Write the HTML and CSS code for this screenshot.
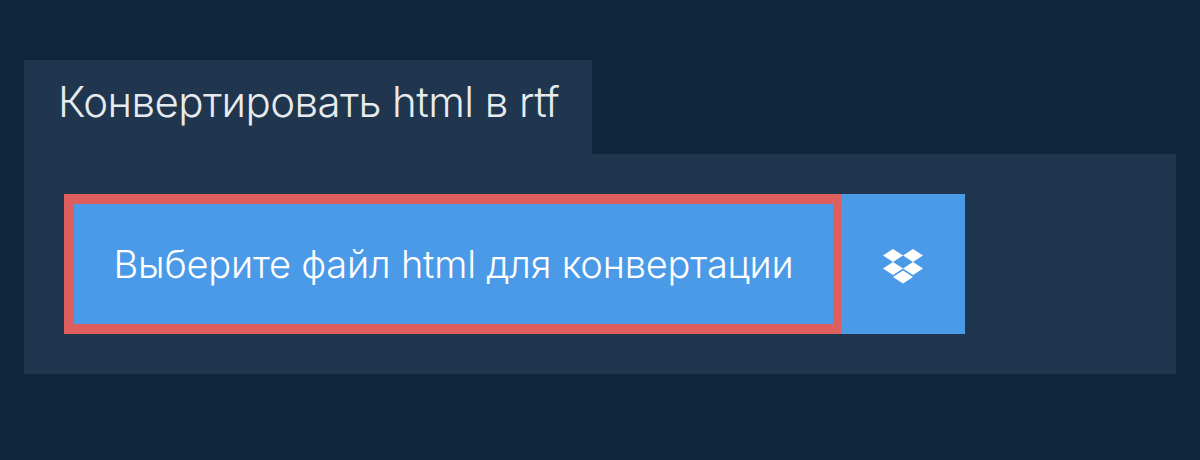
FILE: index.html
```html
<!DOCTYPE html>
<html lang="ru">
<head>
    <meta charset="UTF-8">
    <meta name="viewport" content="width=device-width, initial-scale=1.0">
    <title>Конвертировать html в rtf</title>
    <link rel="stylesheet" href="styles.css">
</head>
<body>

<div class="converter">
    <h1 class="tab">Конвертировать html в rtf</h1>
    <div class="panel">
        <button class="choose">Выберите файл html для конвертации</button>
        <button class="dropbox" aria-label="Dropbox">
            <svg viewBox="0 0 40 35" width="40" height="35" fill="#fff">
                <path d="M10 0 20 6.500 10 13 0 6.500Z"/>
                <path d="M30 0 40 6.500 30 13 20 6.500Z"/>
                <path d="M10 13 20 19.500 10 26 0 19.500Z"/>
                <path d="M30 13 40 19.500 30 26 20 19.500Z"/>
                <path d="M20 21.500 30 28 20 34.500 10 28Z"/>
            </svg>
        </button>
    </div>
</div>

</body>
</html>
```

FILE: styles.css
```css
body {
    margin: 0;
    height: 460px;
    background-color: #0f253b;
    font-family: Inter, "Noto Sans", sans-serif;
    overflow: hidden;
}
.converter {
    padding: 60px 24px 0;
}
.tab {
    width: 568px;
    box-sizing: border-box;
    height: 94px;
    margin: 0;
    padding-left: 34px;
    background-color: #20364e;
    color: #e8ebee;
    font-size: 42px;
    font-weight: 300;
    line-height: 84px;
    letter-spacing: -0.57px;
}
.panel {
    display: flex;
    height: 140px;
    padding: 40px;
    background-color: #20364e;
}
button {
    border: none;
    background-color: #4a9ae8;
    color: #fff;
    font-family: inherit;
    cursor: pointer;
}
.choose {
    width: 777px;
    padding: 0;
    border: solid #dd5e5c;
    border-width: 10px 8px 10px 10px;
    font-size: 38px;
    font-weight: 300;
    letter-spacing: -0.2px;
}
.dropbox {
    display: flex;
    align-items: center;
    justify-content: center;
    width: 124px;
    padding: 4px 0 0;
}
```
